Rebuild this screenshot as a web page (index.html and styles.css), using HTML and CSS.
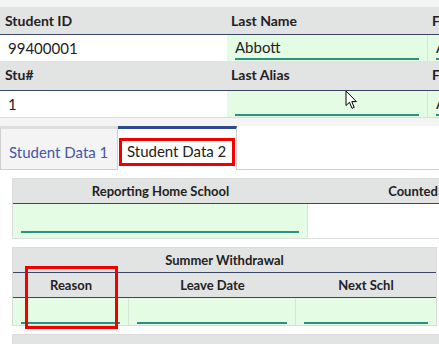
FILE: index.html
```html
<!DOCTYPE html>
<html>
<head>
<meta charset="utf-8">
<link rel="stylesheet" href="styles.css">
</head>
<body>
<div class="page">
  <div class="topstrip"></div>
  <div class="rec">
    <div class="hrow">
      <div class="h">Student ID</div>
      <div class="h">Last Name</div>
      <div class="h">First Name</div>
    </div>
    <div class="drow">
      <div class="d plain">99400001</div>
      <div class="d inp"><span class="fld">Abbott</span></div>
      <div class="d inp"><span class="fld">Allen</span></div>
    </div>
    <div class="hrow tall">
      <div class="h">Stu#</div>
      <div class="h">Last Alias</div>
      <div class="h">First Alias</div>
    </div>
    <div class="drow last">
      <div class="d plain">1</div>
      <div class="d inp"><span class="fld"></span></div>
      <div class="d inp"><span class="fld">A</span></div>
    </div>
    <svg class="cursor" width="13" height="20" viewBox="0 0 13 20"><path d="M1 1 L1 15.5 L4.5 12.3 L7 18.3 L9.2 17.4 L6.8 11.6 L11.4 11.6 Z" fill="#fff" stroke="#000" stroke-width="1" stroke-linejoin="round"/></svg>
  </div>
  <div class="tabs">
    <div class="tab">Student Data 1</div>
    <div class="tab active"><span class="hl">Student Data 2</span></div>
    <div class="tabfill"></div>
  </div>
  <div class="panel">
    <div class="sec sec1">
      <div class="srow shead">
        <div class="sh c1">Reporting Home School</div>
        <div class="sh c2">Counted</div>
      </div>
      <div class="srow sbody">
        <div class="sc inp c1"><span class="fld"></span></div>
        <div class="sc white c2"></div>
      </div>
    </div>
    <div class="sec sec2">
      <div class="shead single">Summer Withdrawal</div>
      <div class="srow shead cols3">
        <div class="sh">Reason</div>
        <div class="sh">Leave Date</div>
        <div class="sh">Next Schl</div>
      </div>
      <div class="srow cols3 sbody2">
        <div class="sc inp"><span class="fld"></span></div>
        <div class="sc inp"><span class="fld"></span></div>
        <div class="sc inp"><span class="fld"></span></div>
      </div>
      <div class="redbox"></div>
    </div>
    <div class="sec sec3">
      <div class="shead single"></div>
    </div>
  </div>
</div>
</body>
</html>
```
FILE: styles.css
```css
html, body {
  margin: 0;
  padding: 0;
  overflow: hidden;
  width: 439px;
  height: 344px;
  background: #ffffff;
  font-family: "Lato", "Open Sans", sans-serif;
  color: #222;
}
.page {
  width: 439px;
  height: 344px;
  overflow: hidden;
  position: relative;
}
.topstrip {
  height: 7px;
  background: #f4f4f4;
}
.rec {
  position: relative;
  background: #fff;
  border-bottom: 1px solid #dcdcdc;
}
.hrow, .drow {
  display: grid;
  grid-template-columns: 227px 201px 220px;
  width: 648px;
}
.hrow {
  height: 27px;
  background: #e2e3e3;
  border-bottom: 1px solid #3a4764;
}
.hrow.tall {
  height: 29px;
}
.h {
  font-size: 14px;
  font-weight: 700;
  line-height: 27px;
  padding-left: 5px;
  color: #222;
  white-space: nowrap;
}
.h:nth-child(n+2) {
  padding-left: 4px;
}
.drow {
  height: 26px;
}
.d {
  font-size: 15px;
  line-height: 26px;
  white-space: nowrap;
}
.d.plain {
  padding-left: 8px;
  background: #fff;
}
.d.inp {
  background: #e3fce3;
  border-right: 1px solid #d6e6d6;
  display: flex;
  align-items: flex-end;
  padding: 0 8px 1px 8px;
}
.fld {
  display: block;
  flex: 1;
  height: 22px;
  line-height: 22px;
  border-bottom: 2px solid #2b9181;
  color: #1f2228;
}
.cursor {
  position: absolute;
  left: 345px;
  top: 83px;
}
.tabs {
  margin-top: 8px;
  display: flex;
  background: #fff;
  border-bottom: 1px solid #cfcfcf;
  height: 43px;
  box-shadow: 0 -9px 0 #f4f4f4;
}
.tab {
  box-sizing: border-box;
  height: 43px;
  font-size: 15px;
  white-space: nowrap;
}
.tab:first-child {
  width: 118px;
  background: #f4f4f4;
  border: 1px solid #cfcfcf;
  border-top: 3px solid #dedede;
  border-bottom: none;
  color: #4556a6;
  padding: 14px 0 0 8px;
}
.tab.active {
  width: 119px;
  height: 44px;
  margin-bottom: -1px;
  background: #fff;
  border-top: 3px solid #2d4a8e;
  border-right: 1px solid #cfcfcf;
  padding: 9px 0 0 1px;
}
.hl {
  display: block;
  box-sizing: border-box;
  width: 116px;
  height: 28px;
  border: 3px solid #f20000;
  padding-left: 5px;
  line-height: 21px;
  color: #222;
}
.tabfill {
  flex: 1;
}
.panel {
  background: #fff;
  padding: 8px 0 0 12px;
}
.sec {
  position: relative;
  border: 1px solid #dcdcdc;
  margin-bottom: 8px;
  background: #fff;
}
.sec1 {
  width: 600px;
}
.sec2 {
  width: 423px;
}
.sec3 {
  width: 600px;
}
.srow {
  display: grid;
}
.sec1 .srow {
  grid-template-columns: 295px 210px;
}
.cols3 {
  grid-template-columns: 116px 167px 140px;
}
.shead {
  height: 24px;
  background: #e2e3e3;
  border-bottom: 1px solid #3a4764;
}
.sh, .shead.single {
  font-size: 13px;
  font-weight: 700;
  line-height: 24px;
  text-align: center;
  white-space: nowrap;
  color: #222;
}
.sbody {
  height: 34px;
}
.sbody .sc.inp {
  padding-bottom: 5px;
}
.sbody2 {
  height: 27px;
}
.sc {
  display: flex;
  align-items: flex-end;
}
.sc.inp {
  background: #e3fce3;
  border-right: 1px solid #d6e6d6;
  padding: 0 8px 1px 8px;
}
.sbody2 .sc.inp:last-child {
  border-right: none;
}
.sc.white {
  background: #fff;
}
.sec3 .shead.single {
  height: 30px;
  border-bottom: none;
}
.redbox {
  position: absolute;
  left: 12px;
  top: 18px;
  width: 93px;
  height: 63px;
  box-sizing: border-box;
  border: 3px solid #f20000;
}
```
